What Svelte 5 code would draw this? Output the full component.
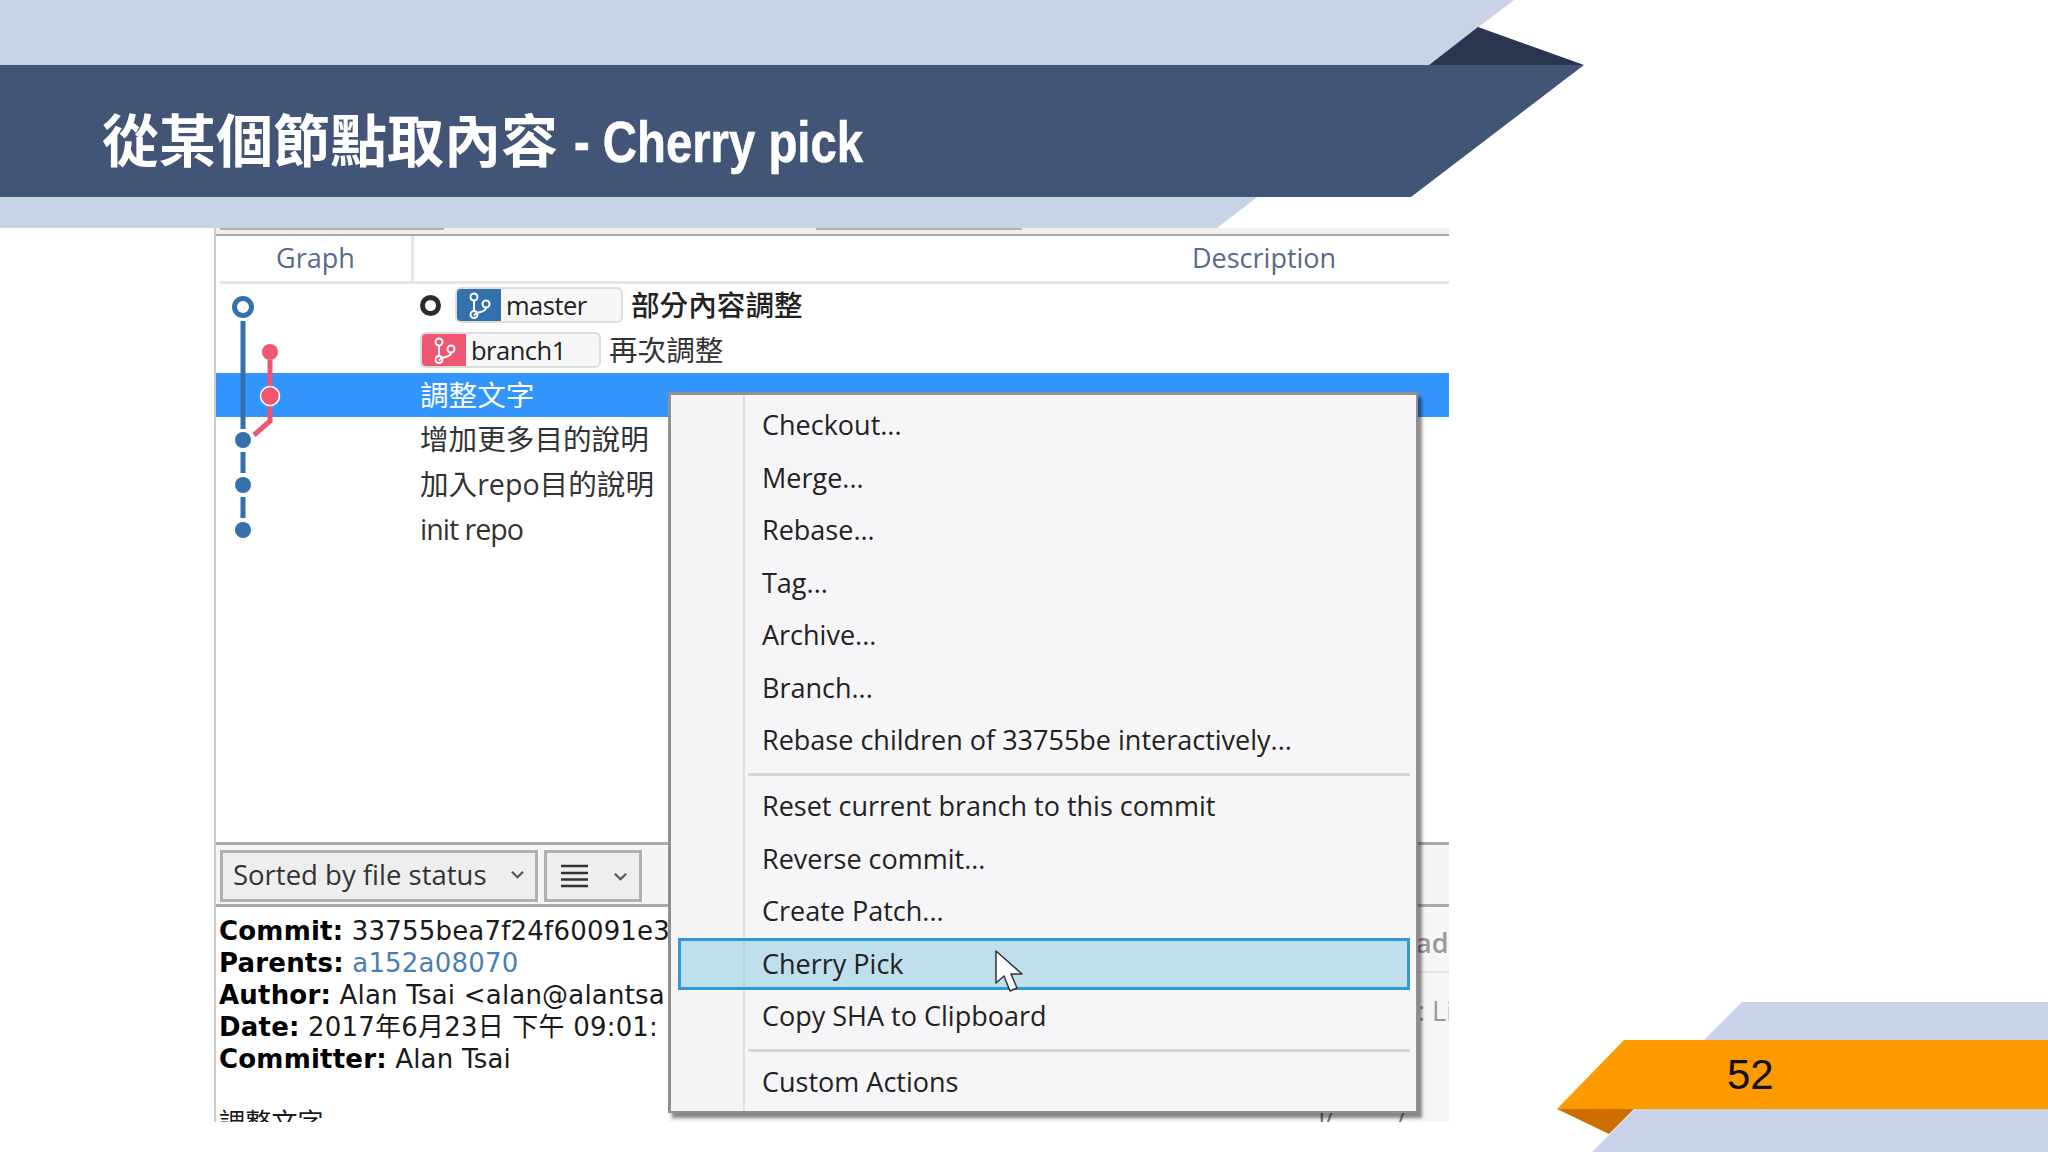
<script>
  const groups = [
    ['Checkout...', 'Merge...', 'Rebase...', 'Tag...', 'Archive...', 'Branch...', 'Rebase children of 33755be interactively...'],
    ['Reset current branch to this commit', 'Reverse commit...', 'Create Patch...', 'Cherry Pick', 'Copy SHA to Clipboard'],
    ['Custom Actions']
  ];
</script>

{#snippet branchIcon()}
  <svg class="bicon" viewBox="0 0 44 35" aria-hidden="true">
    <path d="M17 13v11M29 20c0 6-9 3-12 8" />
    <circle cx="17" cy="9.500" r="3.500" />
    <circle cx="17" cy="27" r="3.500" />
    <circle cx="29" cy="16.500" r="3.500" />
  </svg>
{/snippet}

<div class="slide">
  <svg class="deco" viewBox="0 0 2048 1152" aria-hidden="true">
    <polygon points="0,0 1514,0 1217,228 0,228" fill="#c8d4e6" />
    <polygon points="1478,27 1584,65 1429,65" fill="#2a3550" />
    <polygon points="0,65 1584,65 1411,197 0,197" fill="#425576" />
    <polygon points="1742,1002 2048,1002 2048,1152 1592,1152" fill="#c8d3ea" />
    <polygon points="1557,1109 1634,1109 1609,1134" fill="#cc6f00" />
    <polygon points="1624,1040 2048,1040 2048,1109 1557,1109" fill="#ff9900" />
  </svg>

  <header class="head">
    <h1>從某個節點取內容<span class="latin">- Cherry pick</span></h1>
  </header>

  <main class="window">
    <div class="chrome">
      <span class="tab t1"></span>
      <span class="tab t2"></span>
    </div>
    <div class="columns">
      <div class="col-graph">Graph</div>
      <div class="col-desc">Description</div>
    </div>

    <div class="log">
      <svg class="graph" viewBox="0 0 80 260" aria-hidden="true">
        <g fill="none" stroke="#3470ac" stroke-width="5">
          <circle cx="29" cy="18" r="8.500" />
          <path d="M29 32v108M29 163v21M29 208v21" />
        </g>
        <path d="M56 71v61L40 146" fill="none" stroke="#ee5672" stroke-width="5" />
        <circle cx="56" cy="63" r="8" fill="#ee5672" />
        <circle cx="56" cy="107" r="9.500" fill="#ee5672" stroke="#fff" stroke-width="1.500" />
        <circle cx="29" cy="151" r="8" fill="#3470ac" />
        <circle cx="29" cy="196" r="8" fill="#3470ac" />
        <circle cx="29" cy="241" r="8" fill="#3470ac" />
      </svg>

      <div class="row">
        <span class="head-ring"></span>
        <span class="ref master">{@render branchIcon()}<b>master</b></span>
        <span class="msg strong">部分內容調整</span>
      </div>
      <div class="row">
        <span class="ref branch">{@render branchIcon()}<b>branch1</b></span>
        <span class="msg">再次調整</span>
      </div>
      <div class="row selected"><span class="msg">調整文字</span></div>
      <div class="row"><span class="msg">增加更多目的說明</span></div>
      <div class="row"><span class="msg">加入repo目的說明</span></div>
      <div class="row"><span class="msg tight">init repo</span></div>
    </div>

    <div class="toolbar">
      <div class="combo sort">
        <span>Sorted by file status</span>
        <svg class="chev" viewBox="0 0 14 9" aria-hidden="true"><path d="M1 1.500l6 6 6-6" /></svg>
      </div>
      <div class="combo view">
        <svg class="lines" viewBox="0 0 27 24" aria-hidden="true"><path d="M0 2h27M0 9h27M0 15.500h27M0 22h27" /></svg>
        <svg class="chev" viewBox="0 0 14 9" aria-hidden="true"><path d="M1 1.500l6 6 6-6" /></svg>
      </div>
    </div>

    <div class="lower">
      <div class="details">
        <div><b>Commit:</b> 33755bea7f24f60091e3</div>
        <div><b>Parents:</b> <span class="link">a152a08070</span></div>
        <div><b>Author:</b> Alan Tsai &lt;alan@alantsa</div>
        <div><b>Date:</b> 2017年6月23日 下午 09:01:</div>
        <div><b>Committer:</b> Alan Tsai</div>
        <div class="body">調整文字</div>
      </div>
      <div class="files">
        <div class="frag first">adM</div>
        <div class="frag second">: Li</div>
        <div class="frag third"><span>I/</span><span>/</span></div>
      </div>
    </div>
  </main>

  <nav class="menu">
    {#each groups as items, g}
      {#if g > 0}<div class="sep"></div>{/if}
      {#each items as item}
        <div class="item" class:hot={item === 'Cherry Pick'}>{item}</div>
      {/each}
    {/each}
  </nav>

  <svg class="cursor" viewBox="0 0 28 43" aria-hidden="true">
    <path d="M1 1v32l8-7 6 15 7-3-6-14h11z" fill="#fff" stroke="#333" stroke-width="1.500" stroke-linejoin="round" />
  </svg>

  <div class="pageno">52</div>
</div>

<style>
  :global(body) {
    margin: 0;
    background: #fff;
  }
  .slide {
    position: relative;
    width: 2048px;
    height: 1152px;
    overflow: hidden;
    background: #fff;
    font-family: "Open Sans", "Noto Sans CJK TC", sans-serif;
  }
  .deco {
    position: absolute;
    inset: 0;
    width: 2048px;
    height: 1152px;
  }

  .head {
    position: relative;
    height: 228px;
    box-sizing: border-box;
    padding: 87px 0 31px 102px;
    display: flex;
    align-items: center;
  }
  h1 {
    margin: 0;
    font: 700 57px/1 "Liberation Sans", "Noto Sans CJK TC", sans-serif;
    color: #fff;
    white-space: nowrap;
  }
  .latin {
    display: inline-block;
    margin-left: 16px;
    font-size: 58px;
    -webkit-text-stroke: 0.6px #fff;
    transform: scaleX(0.815);
    transform-origin: 0 50%;
  }

  .window {
    position: relative;
    margin-left: 214px;
    width: 1235px;
    height: 894px;
    box-sizing: border-box;
    border-left: 2px solid #ccc;
    display: flex;
    flex-direction: column;
    overflow: hidden;
  }
  .chrome {
    height: 6px;
    flex: none;
    background: #f2eff1;
    border-bottom: 2px solid #aaa;
    display: flex;
  }
  .tab {
    height: 2px;
    background: #b3b3b3;
  }
  .t1 {
    width: 224px;
    margin-left: 4px;
  }
  .t2 {
    width: 206px;
    margin-left: 372px;
  }

  .columns {
    height: 48px;
    flex: none;
    margin-left: 4px;
    box-sizing: border-box;
    border-bottom: 3px solid #e6e6e6;
    display: flex;
    color: #566a8a;
    font-size: 27px;
  }
  .col-graph {
    width: 194px;
    flex: none;
    box-sizing: border-box;
    border-right: 3px solid #e6e6e6;
    padding-left: 56px;
    line-height: 43px;
  }
  .col-desc {
    flex: 1;
    padding-left: 778px;
    line-height: 43px;
  }

  .log {
    position: relative;
    height: 559px;
    flex: none;
    margin-top: -1px;
    box-sizing: border-box;
    color: #333;
    font-size: 28.600px;
  }
  .graph {
    position: absolute;
    left: -2px;
    top: 6px;
    width: 80px;
    height: 260px;
    z-index: 1;
  }
  .row {
    height: 44.800px;
    box-sizing: border-box;
    padding-left: 204px;
    display: flex;
    align-items: center;
    gap: 8px;
    white-space: nowrap;
  }
  .selected {
    background: #3295fd;
    color: #fff;
  }
  .msg {
    line-height: 1;
  }
  .tight {
    letter-spacing: -1px;
  }
  .strong {
    font-weight: 500;
    color: #222;
  }
  .head-ring {
    width: 21px;
    height: 21px;
    box-sizing: border-box;
    border: 5px solid #2b2b2b;
    border-radius: 50%;
    margin-right: 6px;
  }
  .ref {
    height: 36px;
    box-sizing: border-box;
    display: flex;
    align-items: center;
    border: 2px solid #ddd;
    border-radius: 6px;
    background: #f7f7f7;
    overflow: hidden;
    color: #222;
  }
  .ref b {
    font-weight: 400;
    font-size: 25.500px;
    padding-left: 5px;
    letter-spacing: -0.5px;
  }
  .master {
    width: 168px;
  }
  .branch {
    width: 181px;
  }
  .bicon {
    width: 44px;
    height: 36px;
    flex: none;
    fill: none;
    stroke: #fff;
    stroke-width: 2;
  }
  .master .bicon {
    background: #3470ac;
  }
  .branch .bicon {
    background: #ee5672;
  }

  .toolbar {
    height: 65px;
    flex: none;
    box-sizing: border-box;
    border-top: 3px solid #aaa;
    border-bottom: 3px solid #aaa;
    background: #f5f5f5;
    padding: 5px 0 2px 4px;
    display: flex;
    gap: 6px;
    color: #333;
  }
  .combo {
    height: 52px;
    box-sizing: border-box;
    border: 3px solid #b0b0b0;
    background: #eeeeee;
    display: flex;
    align-items: center;
    justify-content: space-between;
  }
  .sort {
    width: 318px;
    padding: 0 11px 3px 10px;
    font-size: 27.500px;
  }
  .view {
    width: 98px;
    padding: 0 12px 0 14px;
  }
  .chev {
    width: 13px;
    height: 9px;
    fill: none;
    stroke: #555;
    stroke-width: 2.400;
  }
  .lines {
    width: 27px;
    height: 24px;
    fill: none;
    stroke: #333;
    stroke-width: 2.500;
  }

  .lower {
    flex: 1;
    min-height: 0;
    display: flex;
    overflow: hidden;
  }
  .details {
    width: 453px;
    flex: none;
    box-sizing: border-box;
    padding: 8px 0 0 3px;
    font: 26px/32px "DejaVu Sans", "Noto Sans CJK TC", sans-serif;
    letter-spacing: 0.2px;
    color: #1a1a1a;
    white-space: nowrap;
    overflow: hidden;
  }
  .details b {
    color: #000;
  }
  .link {
    color: #4a7fb5;
  }
  .body {
    margin-top: 32px;
    font-size: 26px;
  }
  .files {
    flex: 1;
    background: #f6f6f6;
    color: #999;
    font-size: 27px;
    white-space: nowrap;
    padding-left: 751px;
    overflow: hidden;
  }
  .frag {
    line-height: 32px;
  }
  .first {
    margin-top: 20px;
    padding-bottom: 12px;
    border-bottom: 2px solid #e4e4e4;
    margin-left: -8px;
    padding-left: 4px;
    font-weight: 600;
  }
  .second {
    margin-top: 22px;
    margin-left: -2px;
  }
  .third {
    margin: 72px 0 0 -102px;
    display: flex;
    gap: 62px;
    color: #777;
  }

  .menu {
    position: absolute;
    left: 668px;
    top: 392px;
    width: 750px;
    height: 721px;
    box-sizing: border-box;
    border: 3px solid #909090;
    border-right-width: 2px;
    border-bottom-width: 2px;
    background: linear-gradient(to right, #f5f5f6 72px, #dedede 72px, #dedede 74px, #f6f6f8 74px);
    box-shadow: 4px 5px 3px rgba(0, 0, 0, 0.45);
    padding-top: 4px;
    font-size: 27px;
    color: #222;
  }
  .item {
    height: 52.500px;
    box-sizing: border-box;
    padding-left: 91px;
    line-height: 51px;
  }
  .hot {
    margin: 0 6px 0 7px;
    padding-left: 81px;
    border: 3px solid #2d9bd8;
    background: linear-gradient(to right, #bfdfec 62px, #b4d4e2 62px, #b4d4e2 64px, #bfdfec 64px);
    line-height: 45px;
  }
  .sep {
    height: 3px;
    margin: 6px 6px 4.500px 77px;
    background: #d6d6d6;
  }

  .cursor {
    position: absolute;
    left: 995px;
    top: 950px;
    width: 28px;
    height: 43px;
  }

  .pageno {
    position: absolute;
    left: 1727px;
    top: 1054px;
    font: 42px/1 "Liberation Sans", sans-serif;
    color: #111;
  }
</style>
